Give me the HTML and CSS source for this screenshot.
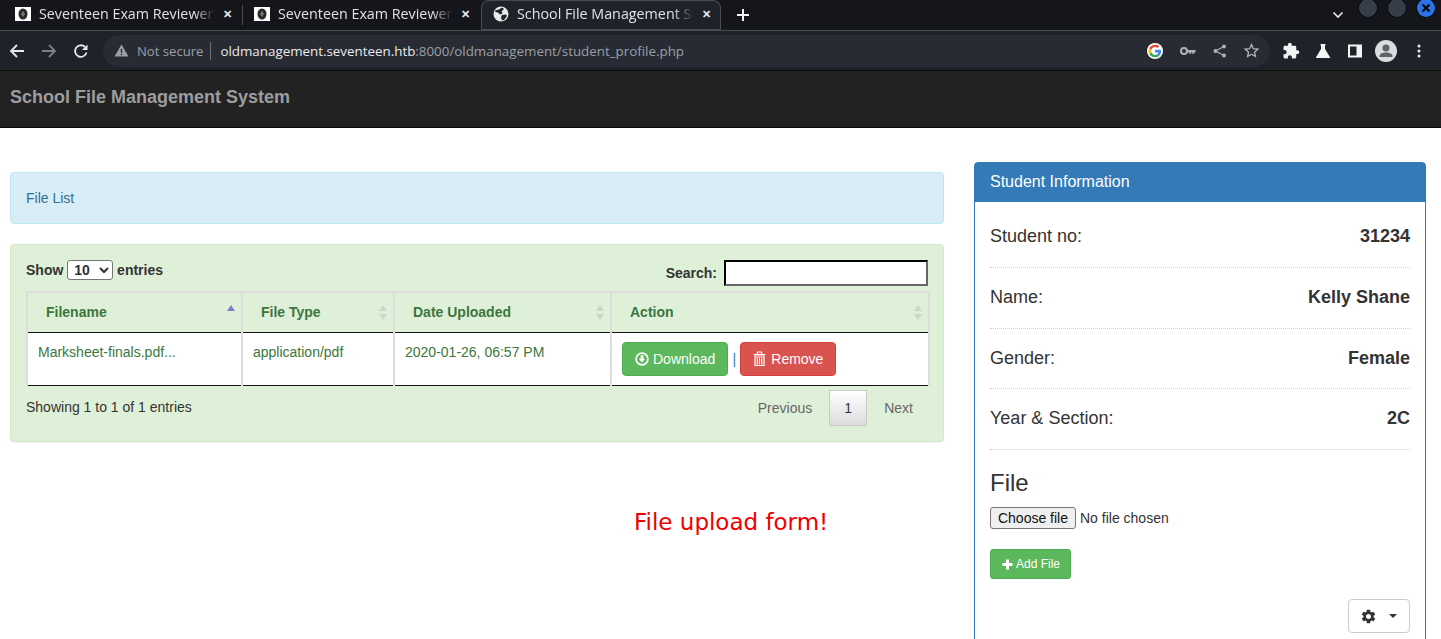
FILE: index.html
```html
<!DOCTYPE html>
<html lang="en">
<head>
    <meta charset="UTF-8">
    <title>School File Management System</title>
    <link rel="stylesheet" href="styles.css">
</head>
<body>

    <!-- browser chrome -->
    <div class="tabstrip">
        <div class="tab tab-first">
            <span class="favicon"><svg width="10" height="12" viewBox="0 0 10 12"><ellipse cx="5" cy="6" rx="4.5" ry="5.5" fill="#2a2a2a"/><path d="M5 3L7 6L5 9L3 6Z" fill="#777"/></svg></span>
            <span class="tab-title">Seventeen Exam Reviewer</span>
            <span class="tab-close">&#10005;</span>
        </div>
        <div class="tab-sep"></div>
        <div class="tab">
            <span class="favicon"><svg width="10" height="12" viewBox="0 0 10 12"><ellipse cx="5" cy="6" rx="4.5" ry="5.5" fill="#2a2a2a"/><path d="M5 3L7 6L5 9L3 6Z" fill="#777"/></svg></span>
            <span class="tab-title">Seventeen Exam Reviewer</span>
            <span class="tab-close">&#10005;</span>
        </div>
        <div class="tab tab-active">
            <svg class="globe" width="16" height="16" viewBox="0 0 16 16"><circle cx="8" cy="8" r="7.5" fill="#e8eaed"/><path d="M2 4.5L6 3.5L9 1.5L11 3L8.5 5.5L9.5 7.5L7 8.5L5 6.5L2.5 6Z M9 9L13 8.5L14 10L11 14L9 14.5L8 11.5Z" fill="#202124"/></svg>
            <span class="tab-title">School File Management S</span>
            <span class="tab-close">&#10005;</span>
        </div>
        <svg class="new-tab" width="14" height="14" viewBox="0 0 14 14"><path d="M7 1V13M1 7H13" stroke="#f1f3f4" stroke-width="2"/></svg>
        <div class="strip-right">
            <svg class="tab-search" width="12" height="8" viewBox="0 0 12 8"><path d="M1.5 1.5L6 6L10.5 1.5" stroke="#e8eaed" stroke-width="1.6" fill="none"/></svg>
            <span class="win-btn"></span>
            <span class="win-btn"></span>
            <span class="win-btn win-close"><svg width="10" height="10" viewBox="0 0 10 10"><path d="M1.5 1.5L8.5 8.5M8.5 1.5L1.5 8.5" stroke="#0b0b0b" stroke-width="2.4"/></svg></span>
        </div>
    </div>
    <div class="toolbar">
        <svg class="nav-icon" width="16" height="16" viewBox="0 0 16 16"><path d="M15 8H2M8 2L2 8L8 14" stroke="#e8eaed" stroke-width="1.8" fill="none"/></svg>
        <svg class="nav-icon" width="16" height="16" viewBox="0 0 16 16"><path d="M1 8H14M8 2L14 8L8 14" stroke="#7b7e84" stroke-width="1.8" fill="none"/></svg>
        <svg class="nav-icon" width="16" height="16" viewBox="0 0 16 16"><path d="M13.5 9.5A5.8 5.8 0 1 1 12 4" stroke="#e8eaed" stroke-width="1.8" fill="none"/><path d="M14.5 1.5V7H9Z" fill="#e8eaed"/></svg>
        <div class="omnibox">
            <svg width="15" height="13" viewBox="0 0 16 14"><path d="M8 0.5L15.5 13.5H0.5Z" fill="#9aa0a6"/><path d="M8 5V9.5M8 10.5V12" stroke="#292a2d" stroke-width="1.5"/></svg>
            <span class="not-secure">Not secure</span>
            <span class="url"><b>oldmanagement.seventeen.htb</b>:8000/oldmanagement/student_profile.php</span>
            <span class="omni-icons">
                <span class="g-badge"><svg width="14" height="14" viewBox="0 0 14 14"><path d="M13 7.2C13 6.7 13 6.3 12.9 5.8H7V8.4H10.4C10.2 9.2 9.8 9.9 9.1 10.3L11.1 11.9C12.3 10.8 13 9.2 13 7.2Z" fill="#4285f4"/><path d="M7 13.2C8.7 13.2 10.1 12.6 11.1 11.9L9.1 10.3C8.5 10.7 7.8 10.9 7 10.9C5.3 10.9 3.9 9.8 3.4 8.3L1.3 9.9C2.3 11.9 4.5 13.2 7 13.2Z" fill="#34a853"/><path d="M3.4 8.3C3.1 7.5 3.1 6.5 3.4 5.7L1.3 4.1C0.4 5.9 0.4 8.1 1.3 9.9Z" fill="#fbbc05"/><path d="M7 3.1C7.9 3.1 8.7 3.4 9.3 4L11.1 2.2C10 1.2 8.6 0.7 7 0.8C4.5 0.8 2.3 2.1 1.3 4.1L3.4 5.7C3.9 4.2 5.3 3.1 7 3.1Z" fill="#ea4335"/></svg></span>
                <svg width="16" height="10" viewBox="0 0 16 10"><circle cx="4" cy="5" r="3" fill="none" stroke="#aeb1b5" stroke-width="2"/><path d="M7 4H15.5V6.5H14V8H12.5V6.5H11V8H9.5V6.5H7Z" fill="#aeb1b5"/></svg>
                <svg width="14" height="14" viewBox="0 0 14 14"><circle cx="11" cy="2.5" r="2" fill="#aeb1b5"/><circle cx="11" cy="11.5" r="2" fill="#aeb1b5"/><circle cx="2.5" cy="7" r="2" fill="#aeb1b5"/><path d="M11 2.5L2.5 7L11 11.5" stroke="#aeb1b5" stroke-width="1.2" fill="none"/></svg>
                <svg width="15" height="15" viewBox="0 0 24 24"><path d="M12 2.5L14.9 9.1L22 9.8L16.7 14.6L18.2 21.6L12 18L5.8 21.6L7.3 14.6L2 9.8L9.1 9.1Z" fill="none" stroke="#aeb1b5" stroke-width="2.2"/></svg>
            </span>
        </div>
        <div class="tool-icons">
            <svg width="18" height="18" viewBox="0 0 24 24"><path d="M20.5 11H19V7c0-1.1-.9-2-2-2h-4V3.5C13 2.12 11.88 1 10.5 1S8 2.12 8 3.5V5H4c-1.1 0-1.99.9-1.99 2v3.8H3.5c1.49 0 2.7 1.21 2.7 2.7s-1.21 2.7-2.7 2.7H2V20c0 1.1.9 2 2 2h3.8v-1.5c0-1.49 1.21-2.7 2.7-2.7 1.49 0 2.7 1.21 2.7 2.7V22H17c1.1 0 2-.9 2-2v-4h1.5c1.38 0 2.5-1.12 2.5-2.5S21.88 11 20.5 11z" fill="#f1f3f4"/></svg>
            <svg width="16" height="16" viewBox="0 0 16 16"><path d="M5.5 1H10.5V2.2H10V6L15 14.2C15.3 14.8 15 15 14.5 15H1.5C1 15 0.7 14.8 1 14.2L6 6V2.2H5.5Z" fill="#f1f3f4"/></svg>
            <svg class="tool-panel" width="14" height="14" viewBox="0 0 14 14"><path fill-rule="evenodd" d="M0 0.5H14V13.5H0ZM2 2.5V11.5H8.5V2.5Z" fill="#f1f3f4"/></svg>
            <span class="avatar"><svg width="22" height="22" viewBox="0 0 22 22"><circle cx="11" cy="11" r="11" fill="#dadce0"/><circle cx="11" cy="8" r="3.5" fill="#5f6368"/><path d="M4.5 16C4.5 13.5 8 12.5 11 12.5C14 12.5 17.5 13.5 17.5 16V17H4.5Z" fill="#5f6368"/></svg></span>
            <svg class="tool-menu" width="4" height="14" viewBox="0 0 4 14"><circle cx="2" cy="2" r="1.5" fill="#e8eaed"/><circle cx="2" cy="7" r="1.5" fill="#e8eaed"/><circle cx="2" cy="12" r="1.5" fill="#e8eaed"/></svg>
        </div>
    </div>

    <!-- page -->
    <nav class="navbar">School File Management System</nav>

    <div class="page">
        <div class="main-col">
            <div class="alert-info">File List</div>
            <div class="well-success">
                <div class="dt-top">
                    <label class="dt-length">Show
                        <select><option>10</option><option>25</option></select>
                        entries</label>
                    <label class="dt-search">Search: <input type="text" class="search-box"></label>
                </div>
                <table class="file-table">
                    <thead>
                        <tr>
                            <th class="col-name sorted">Filename<span class="sort"></span></th>
                            <th class="col-type">File Type<span class="sort"></span></th>
                            <th class="col-date">Date Uploaded<span class="sort"></span></th>
                            <th class="col-action">Action<span class="sort"></span></th>
                        </tr>
                    </thead>
                    <tbody>
                        <tr>
                            <td>Marksheet-finals.pdf...</td>
                            <td>application/pdf</td>
                            <td>2020-01-26, 06:57 PM</td>
                            <td>
                                <div class="row-actions">
                                    <button class="btn btn-green"><svg width="14" height="14" viewBox="0 0 14 14"><circle cx="7" cy="7" r="5.9" fill="none" stroke="#fff" stroke-width="1.7"/><path d="M5.6 3.2H8.4V6.8H10.2L7 10.4L3.8 6.8H5.6Z" fill="#fff"/></svg>Download</button>
                                    <span class="pipe">|</span>
                                    <button class="btn btn-red"><svg width="13" height="15" viewBox="0 0 13 15"><path d="M0.5 3.5H12.5M4 3.5L4.6 1H8.4L9 3.5" stroke="#fff" stroke-width="1.2" fill="none"/><path d="M2 5H11V14.5H2ZM4.3 6V13.5M6.5 6V13.5M8.7 6V13.5" stroke="#fff" stroke-width="1.2" fill="none"/></svg>Remove</button>
                                </div>
                            </td>
                        </tr>
                    </tbody>
                </table>
                <div class="dt-bottom">
                    <span class="dt-info">Showing 1 to 1 of 1 entries</span>
                    <div class="pager">
                        <span>Previous</span>
                        <span class="page-current">1</span>
                        <span>Next</span>
                    </div>
                </div>
            </div>
            <p class="upload-note">File upload form!</p>
        </div>

        <aside class="student-panel">
            <div class="panel-head">Student Information</div>
            <div class="panel-body">
                <div class="info-row"><span>Student no:</span><b>31234</b></div>
                <div class="info-row"><span>Name:</span><b>Kelly Shane</b></div>
                <div class="info-row"><span>Gender:</span><b>Female</b></div>
                <div class="info-row"><span>Year &amp; Section:</span><b>2C</b></div>
                <h3 class="file-title">File</h3>
                <div class="file-field">
                    <button class="file-btn">Choose file</button>
                    <span>No file chosen</span>
                </div>
                <button class="btn-add"><svg width="11" height="11" viewBox="0 0 11 11"><path d="M5.5 0.5V10.5M0.5 5.5H10.5" stroke="#fff" stroke-width="3"/></svg>Add File</button>
                <div class="gear-row">
                    <button class="btn-gear">
                        <svg width="17" height="17" viewBox="0 0 24 24"><path d="M19.14 12.94c.04-.3.06-.61.06-.94 0-.32-.02-.64-.07-.94l2.03-1.58c.18-.14.23-.41.12-.61l-1.92-3.32c-.12-.22-.37-.29-.59-.22l-2.39.96c-.5-.38-1.03-.7-1.62-.94l-.36-2.54c-.04-.24-.24-.41-.48-.41h-3.84c-.24 0-.43.17-.47.41l-.36 2.54c-.59.24-1.13.57-1.62.94l-2.39-.96c-.22-.08-.47 0-.59.22L2.74 8.87c-.12.21-.08.47.12.61l2.03 1.58c-.05.3-.09.63-.09.94s.02.64.07.94l-2.03 1.58c-.18.14-.23.41-.12.61l1.92 3.32c.12.22.37.29.59.22l2.39-.96c.5.38 1.03.7 1.62.94l.36 2.54c.05.24.24.41.48.41h3.84c.24 0 .44-.17.47-.41l.36-2.54c.59-.24 1.13-.56 1.62-.94l2.39.96c.22.08.47 0 .59-.22l1.92-3.32c.12-.22.07-.47-.12-.61l-2.01-1.58zM12 15.6c-1.98 0-3.6-1.62-3.6-3.6s1.62-3.6 3.6-3.6 3.6 1.62 3.6 3.6-1.62 3.6-3.6 3.6z" fill="#333"/></svg>
                        <span class="caret"></span>
                    </button>
                </div>
            </div>
        </aside>
    </div>

</body>
</html>
```

FILE: styles.css
```css
* {
    box-sizing: border-box;
}
html, body {
    height: 639px;
    overflow: hidden;
}
body {
    margin: 0;
    font-family: "Liberation Sans", Arial, sans-serif;
    font-size: 14px;
    line-height: 20px;
    color: #333;
    background: #fff;
}
button {
    font-family: inherit;
}

/* browser chrome */
.tabstrip {
    height: 30px;
    display: flex;
    align-items: center;
    background: #15161b;
    font-family: "Open Sans", "Noto Sans", sans-serif;
    font-size: 14.3px;
    color: #dfe1e5;
}
.tab {
    width: 238px;
    height: 30px;
    flex: none;
    padding: 0 11px 2px 11px;
    display: flex;
    align-items: center;
    gap: 8px;
}
.tab-first {
    width: 242px;
    padding-left: 15px;
    padding-right: 10px;
}
.tab-sep {
    width: 1px;
    height: 20px;
    background: #4b4c50;
    flex: none;
}
.favicon {
    width: 16px;
    height: 14px;
    flex: none;
    background: #fff;
    display: flex;
    align-items: center;
    justify-content: center;
}
.globe {
    flex: none;
}
.tab-title {
    flex: 1;
    min-width: 0;
    white-space: nowrap;
    -webkit-mask-image: linear-gradient(to right, #000 88%, transparent);
    mask-image: linear-gradient(to right, #000 88%, transparent);
}
.tab-close {
    font-size: 11px;
    font-weight: bold;
    color: #e8eaed;
    flex: none;
}
.tab-active {
    width: 240px;
    padding-left: 12px;
    padding-right: 10px;
    background: #202229;
    border-radius: 8px 8px 0 0;
    box-shadow: inset 0 0 0 1px #4a4b4f;
}
.new-tab {
    margin-left: 15px;
    flex: none;
}
.strip-right {
    margin-left: auto;
    display: flex;
    align-items: center;
    gap: 11px;
    padding-right: 6px;
    height: 30px;
    margin-top: -14px;
}
.tab-search {
    margin: 14px 4px 0 0;
}
.win-btn {
    width: 18px;
    height: 18px;
    border-radius: 50%;
    background: #383d4a;
    box-shadow: 0 0 0 1px #0b0c0f;
    display: flex;
    align-items: center;
    justify-content: center;
}
.win-close {
    background: #2a74e8;
}
.toolbar {
    height: 41px;
    display: flex;
    align-items: center;
    padding-left: 9px;
    gap: 16px;
    background: #202229;
    border-top: 1px solid #4a4b4f;
    border-bottom: 1px solid #0c0d0f;
}
.nav-icon {
    flex: none;
}
.omnibox {
    width: 1167px;
    height: 32px;
    flex: none;
    margin-left: -2px;
    border-radius: 16px;
    background: #282a34;
    display: flex;
    align-items: center;
    padding: 0 11px;
    font-family: "Open Sans", "Noto Sans", sans-serif;
    font-size: 13.36px;
    color: #9aa0a6;
}
.not-secure {
    margin-left: 8px;
    padding-right: 7px;
    font-size: 13.1px;
    border-right: 1px solid #6a6d73;
    line-height: 18px;
}
.url {
    margin-left: 9px;
    white-space: nowrap;
}
.url b {
    font-weight: normal;
    color: #e8eaed;
}
.omni-icons {
    margin-left: auto;
    display: flex;
    align-items: center;
    gap: 17px;
}
.g-badge {
    width: 16px;
    height: 16px;
    border-radius: 50%;
    background: #fff;
    display: flex;
    align-items: center;
    justify-content: center;
}
.tool-icons {
    display: flex;
    align-items: center;
    gap: 15px;
    margin-left: -4px;
}
.tool-panel {
    margin-left: 2px;
}
.avatar {
    height: 22px;
    margin-left: -2px;
}
.tool-menu {
    margin-left: 5px;
}

/* page */
.navbar {
    height: 57px;
    background: #222;
    border-bottom: 1px solid #080808;
    padding: 16px 10px;
    font-size: 18px;
    font-weight: bold;
    color: #9d9d9d;
}
.page {
    display: flex;
    align-items: flex-start;
    padding: 34px 15px 0 10px;
}
.main-col {
    width: 934px;
    flex: none;
    padding-top: 10px;
}
.alert-info {
    height: 52px;
    padding: 15px;
    background: #d9edf7;
    border: 1px solid #bce8f1;
    border-radius: 4px;
    color: #31708f;
    margin-bottom: 20px;
}
.well-success {
    height: 198px;
    padding: 15px;
    background: #dff0d8;
    border: 1px solid #d6e9c6;
    border-radius: 4px;
    box-shadow: 0 1px 1px rgba(0, 0, 0, 0.05);
}
.dt-top {
    height: 31px;
    display: flex;
    justify-content: space-between;
    font-weight: bold;
}
.dt-length select {
    width: 46px;
    height: 20px;
    font-family: inherit;
    font-size: 14px;
    font-weight: bold;
    padding: 0 0 0 2px;
    background: #fff;
    border: 1px solid #767676;
    border-radius: 3px;
    color: #333;
}
.dt-search {
    display: flex;
    align-items: center;
    gap: 7px;
    height: 26px;
}
.search-box {
    width: 204px;
    height: 26px;
    padding: 1px 2px;
    background: #fff;
    border: 2px inset #767676;
    border-color: #222 #666 #666 #222;
}
.file-table {
    width: 904px;
    border-collapse: collapse;
    table-layout: fixed;
}
.file-table th {
    position: relative;
    height: 40px;
    padding: 9px 18px;
    text-align: left;
    color: #3c763d;
    background: #dff0d8;
    border: 2px solid #ddd;
    border-bottom: 1px solid #111;
}
.col-name {
    width: 215px;
}
.col-type {
    width: 152px;
}
.col-date {
    width: 217px;
}
.file-table td {
    padding: 9px 10px;
    vertical-align: top;
    color: #3c763d;
    background: #fff;
    border-left: 2px solid #ddd;
    border-right: 2px solid #ddd;
    border-bottom: 1px solid #111;
}
.row-actions {
    display: flex;
    align-items: center;
}
.sort {
    position: absolute;
    right: 5px;
    top: 12px;
    width: 9px;
    height: 15px;
}
.sort::before, .sort::after {
    content: "";
    position: absolute;
    left: 0;
    border-left: 4.5px solid transparent;
    border-right: 4.5px solid transparent;
}
.sort::before {
    top: 0;
    border-bottom: 6px solid #ccd4cc;
}
.sort::after {
    bottom: 0;
    border-top: 6px solid #ccd4cc;
}
.sorted .sort::before {
    border-bottom-color: #7c7fd0;
}
.sorted .sort::after {
    display: none;
}
.btn {
    height: 34px;
    padding: 0 12px;
    font-size: 14px;
    color: #fff;
    border-radius: 4px;
    border: 1px solid;
    display: inline-flex;
    align-items: center;
    gap: 4px;
}
.btn-green {
    background: #5cb85c;
    border-color: #4cae4c;
}
.btn-red {
    gap: 5px;
    background: #d9534f;
    border-color: #d43f3a;
}
.pipe {
    width: 12px;
    text-align: center;
    color: #337ab7;
}
.dt-bottom {
    display: flex;
    justify-content: space-between;
    margin-top: 4px;
}
.dt-info {
    padding-top: 7px;
}
.pager {
    display: flex;
    align-items: center;
    color: #666;
    gap: 17px;
    padding-right: 15px;
}
.page-current {
    width: 38px;
    height: 36px;
    display: flex;
    align-items: center;
    justify-content: center;
    color: #333;
    border: 1px solid #cacaca;
    background: linear-gradient(to bottom, #fff, #dcdcdc);
}
.upload-note {
    margin: 67px 0 0 624px;
    font-family: "DejaVu Sans", sans-serif;
    font-size: 23px;
    line-height: 26px;
    color: #ee0000;
}

/* student panel */
.student-panel {
    width: 452px;
    height: 500px;
    flex: none;
    margin-left: 30px;
    border: 1px solid #337ab7;
    border-radius: 4px 4px 0 0;
}
.panel-head {
    height: 39px;
    padding: 9px 15px;
    font-size: 16px;
    color: #fff;
    background: #337ab7;
}
.panel-body {
    padding: 5px 15px 15px;
}
.info-row {
    height: 60.8px;
    padding-top: 19px;
    display: flex;
    justify-content: space-between;
    font-size: 18px;
    line-height: 20px;
    border-bottom: 1px dotted #ccc;
}
.file-title {
    margin: 20px 0 0;
    font-size: 24px;
    font-weight: normal;
    line-height: 26px;
}
.file-field {
    display: flex;
    align-items: center;
    gap: 4px;
    margin-top: 11px;
}
.file-btn {
    width: 86px;
    height: 22px;
    padding: 0;
    font-size: 14px;
    color: #111;
    background: #efefef;
    border: 1px solid #767676;
    border-radius: 3px;
}
.btn-add {
    display: flex;
    align-items: center;
    gap: 3px;
    height: 30px;
    margin-top: 20px;
    padding: 0 10px 0 11px;
    font-size: 12px;
    color: #fff;
    background: #5cb85c;
    border: 1px solid #4cae4c;
    border-radius: 3px;
}
.gear-row {
    display: flex;
    justify-content: flex-end;
    margin-top: 20px;
}
.btn-gear {
    width: 62px;
    height: 34px;
    display: flex;
    align-items: center;
    justify-content: center;
    gap: 12px;
    padding: 0 2px 0 0;
    background: #fff;
    border: 1px solid #ccc;
    border-radius: 4px;
}
.caret {
    border-top: 4px solid #333;
    border-left: 4px solid transparent;
    border-right: 4px solid transparent;
}
```
